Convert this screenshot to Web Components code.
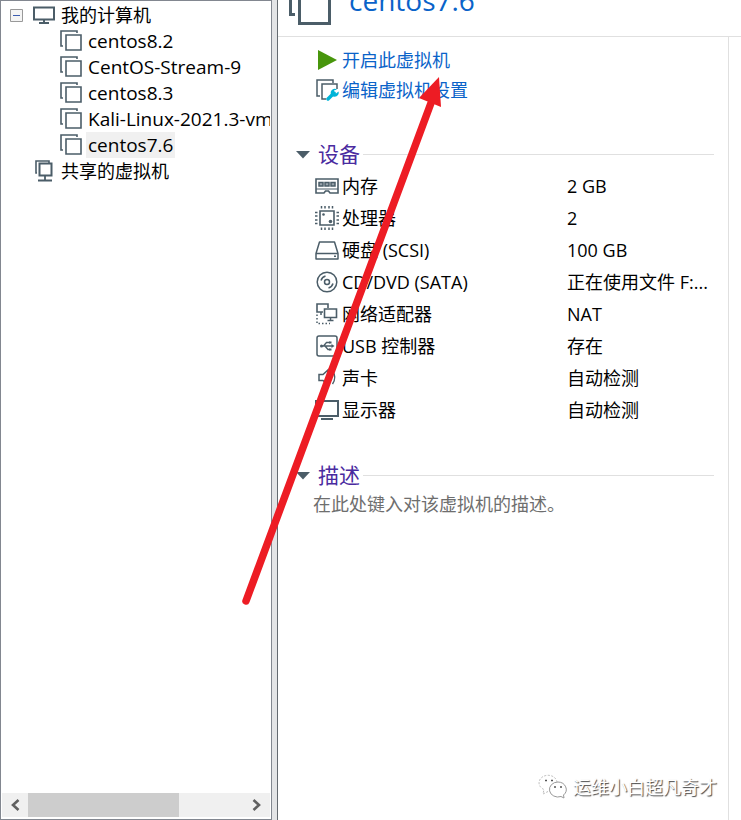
<!DOCTYPE html>
<html lang="zh-CN">
<head>
<meta charset="UTF-8">
<meta name="viewport" content="width=device-width, initial-scale=1.0">
<title>centos7.6</title>
<style>
body{
    margin: 0;
    background-color: #fff;
    color: #000;
    font-family: "Open Sans", "Noto Sans CJK SC", sans-serif;
    font-size: 18px;
    line-height: 26px;
}
</style>
</head>
<body>
<vm-window>
    <vm-sidebar slot="sidebar">
        <vm-node icon="computer" toggle>我的计算机</vm-node>
        <vm-node icon="machine" level="2">centos8.2</vm-node>
        <vm-node icon="machine" level="2">CentOS-Stream-9</vm-node>
        <vm-node icon="machine" level="2">centos8.3</vm-node>
        <vm-node icon="machine" level="2">Kali-Linux-2021.3-vm</vm-node>
        <vm-node icon="machine" level="2" selected>centos7.6</vm-node>
        <vm-node icon="shared">共享的虚拟机</vm-node>
    </vm-sidebar>
    <vm-title slot="title">centos7.6</vm-title>
    <vm-action icon="play">开启此虚拟机</vm-action>
    <vm-action icon="edit">编辑虚拟机设置</vm-action>
    <vm-section heading="设备"><vm-devices></vm-devices></vm-section>
    <vm-section heading="描述"><vm-description></vm-description></vm-section>
    <vm-watermark slot="over">运维小白超凡奇才</vm-watermark>
    <vm-pointer slot="over"></vm-pointer>
</vm-window>

<script>
const icons = {
    computer: [22, 18, `<path d="M1 1.5h20v12H1z" fill="#fff" stroke="#4b5d68" stroke-width="2"/><path d="M11 14v3M6 17h10" stroke="#4b5d68" stroke-width="2"/>`],
    machine: [22, 22, `<path d="M3 16H1V1h16v2" fill="none" stroke="#4b5d68" stroke-width="1.6"/><path d="M6 5h15v15H6z" fill="#fff" stroke="#4b5d68" stroke-width="1.6"/>`],
    shared: [18, 22, `<path d="M2 13H1V1h13v2" fill="none" stroke="#4b5d68" stroke-width="1.6"/><path d="M4.500 3.500h12v12h-12z" fill="#fff" stroke="#4b5d68" stroke-width="2"/><path d="M10 16v4M3 20.500h14" stroke="#4b5d68" stroke-width="1.8"/>`],
    play: [24, 22, `<path d="M2 1v20l19-10z" fill="#48960c"/>`],
    edit: [24, 22, `<path d="M4 17H1V1h16v3" fill="none" stroke="#4b5d68" stroke-width="1.5"/><path d="M10 20H6V5h15v5" fill="none" stroke="#4b5d68" stroke-width="1.5"/><path d="M12 20l6-6" stroke="#00b4d8" stroke-width="3.500" stroke-linecap="round"/><path d="M21 10.500a4 4 0 1 0 1.500 2l-2.500 2-2-1v-2z" fill="#00b4d8"/>`],
    memory: [24, 16, `<path d="M1 1h22v14h-8l-1.500-2h-3L9 15H1z" fill="none" stroke="#4b5d68" stroke-width="1.6"/><path d="M1 11h22" stroke="#4b5d68"/><path d="M4 4.500h4v3.500H4zM10 4.500h4v3.500h-4zM16 4.500h4v3.500h-4z" fill="#9aa5ad" stroke="#4b5d68" stroke-width="1.5"/>`],
    cpu: [24, 24, `<path d="M5 5h14v14H5z" fill="none" stroke="#4b5d68" stroke-width="1.6"/><path d="M6.500 0v2.500M10 0v2.500M14 0v2.500M17.500 0v2.500M6.500 21.500V24M10 21.500V24M14 21.500V24M17.500 21.500V24M0 6.500h2.500M0 10h2.500M0 14h2.500M0 17.500h2.500M21.500 6.500H24M21.500 10H24M21.500 14H24M21.500 17.500H24" stroke="#4b5d68" stroke-width="1.5"/><circle cx="8.500" cy="8.500" r="1.3" fill="#4b5d68"/><circle cx="15.500" cy="15.500" r="1.8" fill="#4b5d68"/>`],
    disk: [24, 19, `<path d="M1 12.500L4.500 1h15L23 12.500V18H1zM1 12.500h22" fill="none" stroke="#4b5d68" stroke-width="1.5" stroke-linejoin="round"/><path d="M19 15.300h2" stroke="#4b5d68" stroke-width="1.5"/>`],
    cd: [24, 22, `<circle cx="12" cy="11" r="9.800" fill="none" stroke="#4b5d68" stroke-width="1.5"/><circle cx="12" cy="11" r="2.500" fill="none" stroke="#4b5d68" stroke-width="1.5"/><path d="M6 9.500A6.500 6.500 0 0 1 10.500 5M18 12.500A6.500 6.500 0 0 1 13.500 17" fill="none" stroke="#4b5d68" stroke-width="1.5"/>`],
    network: [24, 22, `<path d="M8 9H2V1h11v4" fill="none" stroke="#4b5d68" stroke-width="1.6"/><path d="M9.500 6h12v8.500h-12z" fill="#fff" stroke="#4b5d68" stroke-width="1.6"/><path d="M15.500 15v3M12.500 17.500h6M6 9v3" stroke="#4b5d68" stroke-width="1.5"/><path d="M2 11.500V20.500h13" fill="none" stroke="#4b5d68" stroke-width="1.5" stroke-dasharray="1.5 2"/>`],
    usb: [24, 22, `<rect x="2" y="1" width="20" height="20" rx="2" fill="none" stroke="#4b5d68" stroke-width="1.5"/><path d="M6 11h12M8.500 11l3-3.500H15M10 11l3 3.500h2" fill="none" stroke="#4b5d68" stroke-width="1.3"/><circle cx="6.500" cy="11" r="1.5" fill="#4b5d68"/><path d="M16.500 9l3 2-3 2zM14 6.500h2.500v2H14zM14 13.500h2.500v2H14z" fill="#4b5d68"/>`],
    sound: [24, 22, `<path d="M4 7.500h4l5-4.500v15l-5-4.500H4z" fill="none" stroke="#4b5d68" stroke-width="1.5"/><path d="M15 7.500q2 3 0 6M17.500 4q4.500 6.500 0 13" fill="none" stroke="#4b5d68" stroke-width="1.4"/>`],
    display: [24, 20, `<path d="M1 1h22v15H1z" fill="none" stroke="#4b5d68" stroke-width="2"/><path d="M6 19h12" stroke="#4b5d68" stroke-width="2"/>`]
};

function icon(name){
    const [w, h, shapes] = icons[name];
    return `<svg width="${w}" height="${h}" viewBox="0 0 ${w} ${h}" aria-hidden="true">${shapes}</svg>`;
}

class VmWindow extends HTMLElement{
    constructor(){
        super();
        this.attachShadow({mode:'open'})
        this.shadowRoot.innerHTML=`
        <style>
        :host{
            display: flex;
            position: relative;
            min-height: 100vh;
            overflow: hidden;
        }
        aside{
            display: flex;
            flex: 0 0 272px;
            min-width: 0;
        }
        .splitter{
            flex: 0 0 5px;
            background-color: #e3e4e6;
            border-right: 1px solid #646a70;
        }
        main{
            flex: 1;
            min-width: 0;
            display: flex;
            flex-direction: column;
        }
        .content{
            flex: 1;
            margin-right: 12px;
            border-right: 1px solid #e0e0e0;
            padding: 8px 14px 0 34px;
        }
        </style>
        <aside><slot name="sidebar"></slot></aside>
        <div class="splitter"></div>
        <main>
            <slot name="title"></slot>
            <div class="content"><slot></slot></div>
        </main>
        <slot name="over"></slot>
        `
    }
}
customElements.define('vm-window',VmWindow);

class VmSidebar extends HTMLElement{
    constructor(){
        super();
        this.attachShadow({mode:'open'})
        this.shadowRoot.innerHTML=`
        <style>
        :host{
            display: flex;
            flex-direction: column;
            flex: 1;
            min-width: 0;
            box-sizing: border-box;
            border: 1px solid #828790;
            padding: 1px;
        }
        nav{
            flex: 1;
            overflow: hidden;
        }
        .scroll{
            display: flex;
            height: 24px;
            margin-bottom: 1px;
            background-color: #f0f0f0;
        }
        .scroll button{
            flex: 0 0 26px;
            padding: 0;
            border: 0;
            background: none;
            display: flex;
            align-items: center;
            justify-content: center;
        }
        .track{
            flex: 1;
        }
        .thumb{
            width: 70%;
            height: 100%;
            background-color: #cdcdcd;
        }
        </style>
        <nav><slot></slot></nav>
        <div class="scroll">
            <button aria-label="向左滚动"><svg width="10" height="12" viewBox="0 0 10 12"><path d="M8.500 1L3 6l5.500 5" fill="none" stroke="#606060" stroke-width="2.600"/></svg></button>
            <div class="track"><div class="thumb"></div></div>
            <button aria-label="向右滚动"><svg width="10" height="12" viewBox="0 0 10 12"><path d="M1.500 1L7 6l-5.500 5" fill="none" stroke="#606060" stroke-width="2.600"/></svg></button>
        </div>
        `
    }
}
customElements.define('vm-sidebar',VmSidebar);

class VmNode extends HTMLElement{
    constructor(){
        super();
        this.attachShadow({mode:'open'})
    }
    connectedCallback(){
        const toggle = this.hasAttribute('toggle')
            ? `<button aria-label="折叠"><svg width="13" height="13" viewBox="0 0 13 13"><path d="M.5.5h12v12H.5z" fill="#f4f4f4" stroke="#999"/><path d="M3 6.500h7" stroke="#3c5db0"/></svg></button>`
            : '';
        this.shadowRoot.innerHTML=`
        <style>
        :host{
            display: flex;
            height: 26px;
            white-space: nowrap;
        }
        :host([level="2"]){
            font-size: 19px;
        }
        .gutter{
            flex: 0 0 29px;
            display: flex;
            align-items: center;
            justify-content: center;
        }
        :host([level="2"]) .gutter{
            flex-basis: 56px;
        }
        button{
            display: flex;
            padding: 0;
            border: 0;
            background: none;
        }
        .icon{
            flex: 0 0 26px;
            display: flex;
            align-items: center;
            justify-content: center;
            margin-right: 2px;
        }
        a{
            color: inherit;
            text-decoration: none;
            padding: 0 2px;
        }
        :host([selected]) a{
            background-color: #f0f0f0;
        }
        </style>
        <span class="gutter">${toggle}</span>
        <span class="icon">${icon(this.getAttribute('icon'))}</span>
        <a href="#"><slot></slot></a>
        `
    }
}
customElements.define('vm-node',VmNode);

class VmTitle extends HTMLElement{
    constructor(){
        super();
        this.attachShadow({mode:'open'})
        this.shadowRoot.innerHTML=`
        <style>
        /* scrolled half out of view, so the row hangs from its bottom edge */
        :host{
            display: flex;
            align-items: flex-end;
            gap: 18px;
            height: 36px;
            overflow: hidden;
            padding-left: 11px;
            border-bottom: 1px solid #e0e0e0;
        }
        svg{
            flex: none;
            margin-bottom: 11px;
        }
        h1{
            margin: 0 0 17px;
            font-size: 28px;
            line-height: 38px;
            font-weight: normal;
            color: #0a63c9;
        }
        </style>
        <svg width="42" height="42" viewBox="0 0 42 42" aria-hidden="true">
            <path d="M6 31.500H1.500V1.500H33" fill="none" stroke="#4b5d68" stroke-width="3"/>
            <path d="M10.500 8.500h30v32h-30z" fill="#fff" stroke="#4b5d68" stroke-width="3"/>
        </svg>
        <h1><slot></slot></h1>
        `
    }
}
customElements.define('vm-title',VmTitle);

class VmAction extends HTMLElement{
    constructor(){
        super();
        this.attachShadow({mode:'open'})
    }
    connectedCallback(){
        this.shadowRoot.innerHTML=`
        <style>
        :host{
            display: flex;
        }
        a{
            display: flex;
            align-items: center;
            gap: 2px;
            height: 30px;
            padding-left: 4px;
            color: #0a63c9;
            text-decoration: none;
        }
        </style>
        <a href="#">${icon(this.getAttribute('icon'))}<slot></slot></a>
        `
    }
}
customElements.define('vm-action',VmAction);

class VmSection extends HTMLElement{
    constructor(){
        super();
        this.attachShadow({mode:'open'})
    }
    connectedCallback(){
        this.shadowRoot.innerHTML=`
        <style>
        :host{
            display: block;
            margin-top: 34px;
        }
        h2{
            display: flex;
            align-items: center;
            gap: 3px;
            margin: 0 0 0 -16px;
            font-size: 21px;
            line-height: 31px;
            font-weight: normal;
        }
        h2::after{
            content: "";
            flex: 1;
            border-top: 1px solid #e0e0e0;
        }
        button{
            display: flex;
            align-items: center;
            gap: 8px;
            padding: 0;
            border: 0;
            background: none;
            font: inherit;
            color: #4a2ba0;
        }
        </style>
        <h2><button aria-expanded="true"><svg width="14" height="8" viewBox="0 0 14 8"><path d="M0 0h14L7 7.500z" fill="#4b5d68"/></svg>${this.getAttribute('heading')}</button></h2>
        <slot></slot>
        `
    }
}
customElements.define('vm-section',VmSection);

class VmDevices extends HTMLElement{
    constructor(){
        super();
        this.attachShadow({mode:'open'})
        const devices = [
            ['memory', '内存', '2 GB'],
            ['cpu', '处理器', '2'],
            ['disk', '硬盘 (SCSI)', '100 GB'],
            ['cd', 'CD/DVD (SATA)', '正在使用文件 F:...'],
            ['network', '网络适配器', 'NAT'],
            ['usb', 'USB 控制器', '存在'],
            ['sound', '声卡', '自动检测'],
            ['display', '显示器', '自动检测']
        ];
        this.shadowRoot.innerHTML=`
        <style>
        :host{
            display: block;
        }
        table{
            width: 100%;
            border-collapse: collapse;
            table-layout: fixed;
        }
        th, td{
            height: 32px;
            padding: 0;
            font-weight: normal;
            text-align: left;
            white-space: nowrap;
        }
        th{
            width: 255px;
        }
        span{
            display: flex;
            align-items: center;
            gap: 3px;
            padding-left: 3px;
        }
        </style>
        <table>
            ${devices.map(([name, label, value]) => `<tr><th scope="row"><span>${icon(name)}${label}</span></th><td>${value}</td></tr>`).join('')}
        </table>
        `
    }
}
customElements.define('vm-devices',VmDevices);

class VmDescription extends HTMLElement{
    constructor(){
        super();
        this.attachShadow({mode:'open'})
        this.shadowRoot.innerHTML=`
        <style>
        :host{
            display: block;
        }
        textarea{
            display: block;
            box-sizing: border-box;
            width: 100%;
            padding: 0 0 0 1px;
            border: 0;
            resize: none;
            background: none;
            font: inherit;
            color: #6e6e6e;
        }
        textarea::placeholder{
            color: #6e6e6e;
        }
        </style>
        <textarea rows="2" aria-label="描述" placeholder="在此处键入对该虚拟机的描述。"></textarea>
        `
    }
}
customElements.define('vm-description',VmDescription);

class VmWatermark extends HTMLElement{
    constructor(){
        super();
        this.attachShadow({mode:'open'})
        this.shadowRoot.innerHTML=`
        <style>
        :host{
            position: absolute;
            right: 24px;
            bottom: 20px;
            display: flex;
            align-items: center;
            gap: 5px;
            color: #fff;
            text-shadow: 1px 1px 1px #444;
        }
        </style>
        <svg width="30" height="26" viewBox="0 0 30 26" aria-hidden="true" fill="#fff" stroke="#999">
            <path d="M10 17.500l-5 2.500 1-4.500A9 7.500 0 1 1 19 8" stroke-dasharray="2 1.500" stroke="#bbb"/>
            <path d="M20 8a8.500 7.500 0 1 0 3 14.500l3 1.500-.5-3A8.500 7.500 0 0 0 20 8z"/>
            <path d="M7 6.500h2M13 6.500h2M16 13h2M22 13h2" stroke="#555" stroke-width="1.500"/>
        </svg>
        <slot></slot>
        `
    }
}
customElements.define('vm-watermark',VmWatermark);

class VmPointer extends HTMLElement{
    constructor(){
        super();
        this.attachShadow({mode:'open'})
        this.shadowRoot.innerHTML=`
        <style>
        :host{
            position: absolute;
            left: 240px;
            top: 74px;
            pointer-events: none;
        }
        svg{
            display: block;
        }
        </style>
        <svg width="206" height="532" viewBox="0 0 206 532" aria-hidden="true">
            <path d="M6 527L191 29" stroke="#ed1c24" stroke-width="7.500" stroke-linecap="round"/>
            <path d="M199 3l-20 21 22 9z" fill="#ed1c24"/>
        </svg>
        `
    }
}
customElements.define('vm-pointer',VmPointer);
</script>
</body>
</html>
